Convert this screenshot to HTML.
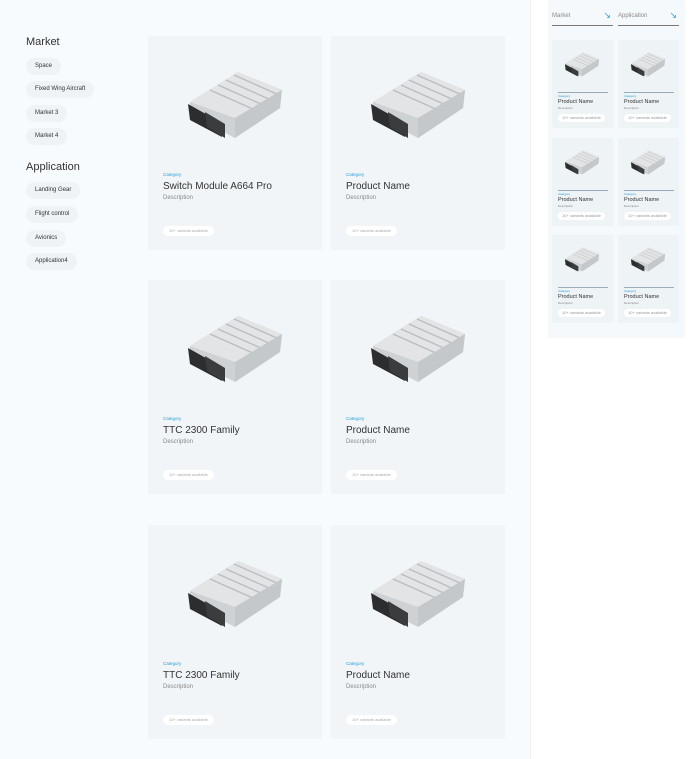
<!DOCTYPE html>
<html><head><meta charset="utf-8"><style>
*{margin:0;padding:0;box-sizing:border-box}
body{width:697px;height:759px;background:#fff;font-family:"Liberation Sans",sans-serif;position:relative;overflow:hidden;color:#222}
.left{position:absolute;left:0;top:0;width:531px;height:759px;background:#f8fbfd;border-right:1px solid #eef1f4}
.h{position:absolute;left:26px;font-size:11px;color:#333}
.chip{position:absolute;left:26px;height:17px;padding:0 9px;border-radius:9px;background:#eff3f6;font-size:6px;line-height:17px;color:#333}
.card{position:absolute;width:174px;height:214px;background:#f1f5f8}
.card svg{position:absolute;left:32px;top:24px}
.cat{position:absolute;left:15px;top:136px;font-size:4.5px;color:#2a9fd6}
.tt{position:absolute;left:15px;top:145px;font-size:10px;color:#333}
.ds{position:absolute;left:15px;top:159px;font-size:6px;color:#888}
.pill{position:absolute;left:15px;top:190px;height:10px;padding:0 6px;background:#fff;border-radius:5px;font-size:4px;line-height:10px;color:#aaa}
.rp{position:absolute;left:548px;top:0;width:137px;height:338px;background:#f5f9fc}
.sel{position:absolute;top:10px;width:61px;height:16px;border-bottom:1px solid #777;font-size:6px;color:#888;padding-top:3px}
.sel span{position:absolute;right:2px;top:0;color:#2a9fd6;font-size:9px}
.sc{position:absolute;width:61px;height:88px;background:#eef3f6}
.sc svg{position:absolute;left:10px;top:8px}
.sc .ln{position:absolute;left:6px;top:52px;width:50px;border-top:1px solid #9ab}
.sc .c{position:absolute;left:6px;top:54px;font-size:3px;color:#2a9fd6}
.sc .t{position:absolute;left:6px;top:59px;font-size:5.5px;color:#333}
.sc .d{position:absolute;left:6px;top:66px;font-size:3px;color:#888}
.sc .p{position:absolute;left:6px;top:74px;height:8px;padding:0 4px;background:#fff;border-radius:4px;font-size:4px;line-height:8px;color:#999}
</style></head><body>
<div class="left"></div>
<div class="h" style="top:36px">Market</div>
<div class="chip" style="top:58px">Space</div>
<div class="chip" style="top:81px">Fixed Wing Aircraft</div>
<div class="chip" style="top:105px">Market 3</div>
<div class="chip" style="top:128px">Market 4</div>
<div class="h" style="top:161px">Application</div>
<div class="chip" style="top:182px">Landing Gear</div>
<div class="chip" style="top:206px">Flight control</div>
<div class="chip" style="top:230px">Avionics</div>
<div class="chip" style="top:253px">Application4</div>

<svg width="0" height="0" style="position:absolute"><defs>
<g id="m">
<polygon points="10,42 58,12 102,30 100,48 55,78 10,55" fill="#cfd2d4"/>
<polygon points="10,42 58,12 102,30 55,58" fill="#e2e4e5"/>
<g stroke="#b9bdc0" stroke-width="1.3"><line x1="30" y1="30" x2="75" y2="50"/><line x1="38" y1="25" x2="83" y2="45"/><line x1="46" y1="20" x2="91" y2="40"/><line x1="54" y1="15" x2="99" y2="35"/></g>
<polygon points="55,58 102,30 100,48 55,78" fill="#c4c8ca"/>
<polygon points="8,44 40,62 42,77 10,60" fill="#2b2d2f"/>
<polygon points="25,52 45,64 45,78 27,67" fill="#3a3c3e"/>
</g></defs></svg>

<div class="card" style="left:148px;top:36px"><svg width="110" height="90"><use href="#m"/></svg><div class="cat">Category</div><div class="tt">Switch Module A664 Pro</div><div class="ds">Description</div><div class="pill">10+ variants available</div></div>
<div class="card" style="left:331px;top:36px"><svg width="110" height="90"><use href="#m"/></svg><div class="cat">Category</div><div class="tt">Product Name</div><div class="ds">Description</div><div class="pill">10+ variants available</div></div>
<div class="card" style="left:148px;top:280px"><svg width="110" height="90"><use href="#m"/></svg><div class="cat">Category</div><div class="tt">TTC 2300 Family</div><div class="ds">Description</div><div class="pill">10+ variants available</div></div>
<div class="card" style="left:331px;top:280px"><svg width="110" height="90"><use href="#m"/></svg><div class="cat">Category</div><div class="tt">Product Name</div><div class="ds">Description</div><div class="pill">10+ variants available</div></div>
<div class="card" style="left:148px;top:525px"><svg width="110" height="90"><use href="#m"/></svg><div class="cat">Category</div><div class="tt">TTC 2300 Family</div><div class="ds">Description</div><div class="pill">10+ variants available</div></div>
<div class="card" style="left:331px;top:525px"><svg width="110" height="90"><use href="#m"/></svg><div class="cat">Category</div><div class="tt">Product Name</div><div class="ds">Description</div><div class="pill">10+ variants available</div></div>

<div class="rp"></div>
<div class="sel" style="left:552px">Market<span>↘</span></div>
<div class="sel" style="left:618px">Application<span>↘</span></div>

<div class="sc" style="left:552px;top:40px"><svg width="40" height="33" viewBox="0 0 110 90"><use href="#m"/></svg><div class="ln"></div><div class="c">Category</div><div class="t">Product Name</div><div class="d">Description</div><div class="p">10+ variants available</div></div>
<div class="sc" style="left:618px;top:40px"><svg width="40" height="33" viewBox="0 0 110 90"><use href="#m"/></svg><div class="ln"></div><div class="c">Category</div><div class="t">Product Name</div><div class="d">Description</div><div class="p">10+ variants available</div></div>
<div class="sc" style="left:552px;top:138px"><svg width="40" height="33" viewBox="0 0 110 90"><use href="#m"/></svg><div class="ln"></div><div class="c">Category</div><div class="t">Product Name</div><div class="d">Description</div><div class="p">10+ variants available</div></div>
<div class="sc" style="left:618px;top:138px"><svg width="40" height="33" viewBox="0 0 110 90"><use href="#m"/></svg><div class="ln"></div><div class="c">Category</div><div class="t">Product Name</div><div class="d">Description</div><div class="p">10+ variants available</div></div>
<div class="sc" style="left:552px;top:235px"><svg width="40" height="33" viewBox="0 0 110 90"><use href="#m"/></svg><div class="ln"></div><div class="c">Category</div><div class="t">Product Name</div><div class="d">Description</div><div class="p">10+ variants available</div></div>
<div class="sc" style="left:618px;top:235px"><svg width="40" height="33" viewBox="0 0 110 90"><use href="#m"/></svg><div class="ln"></div><div class="c">Category</div><div class="t">Product Name</div><div class="d">Description</div><div class="p">10+ variants available</div></div>
</body></html>
